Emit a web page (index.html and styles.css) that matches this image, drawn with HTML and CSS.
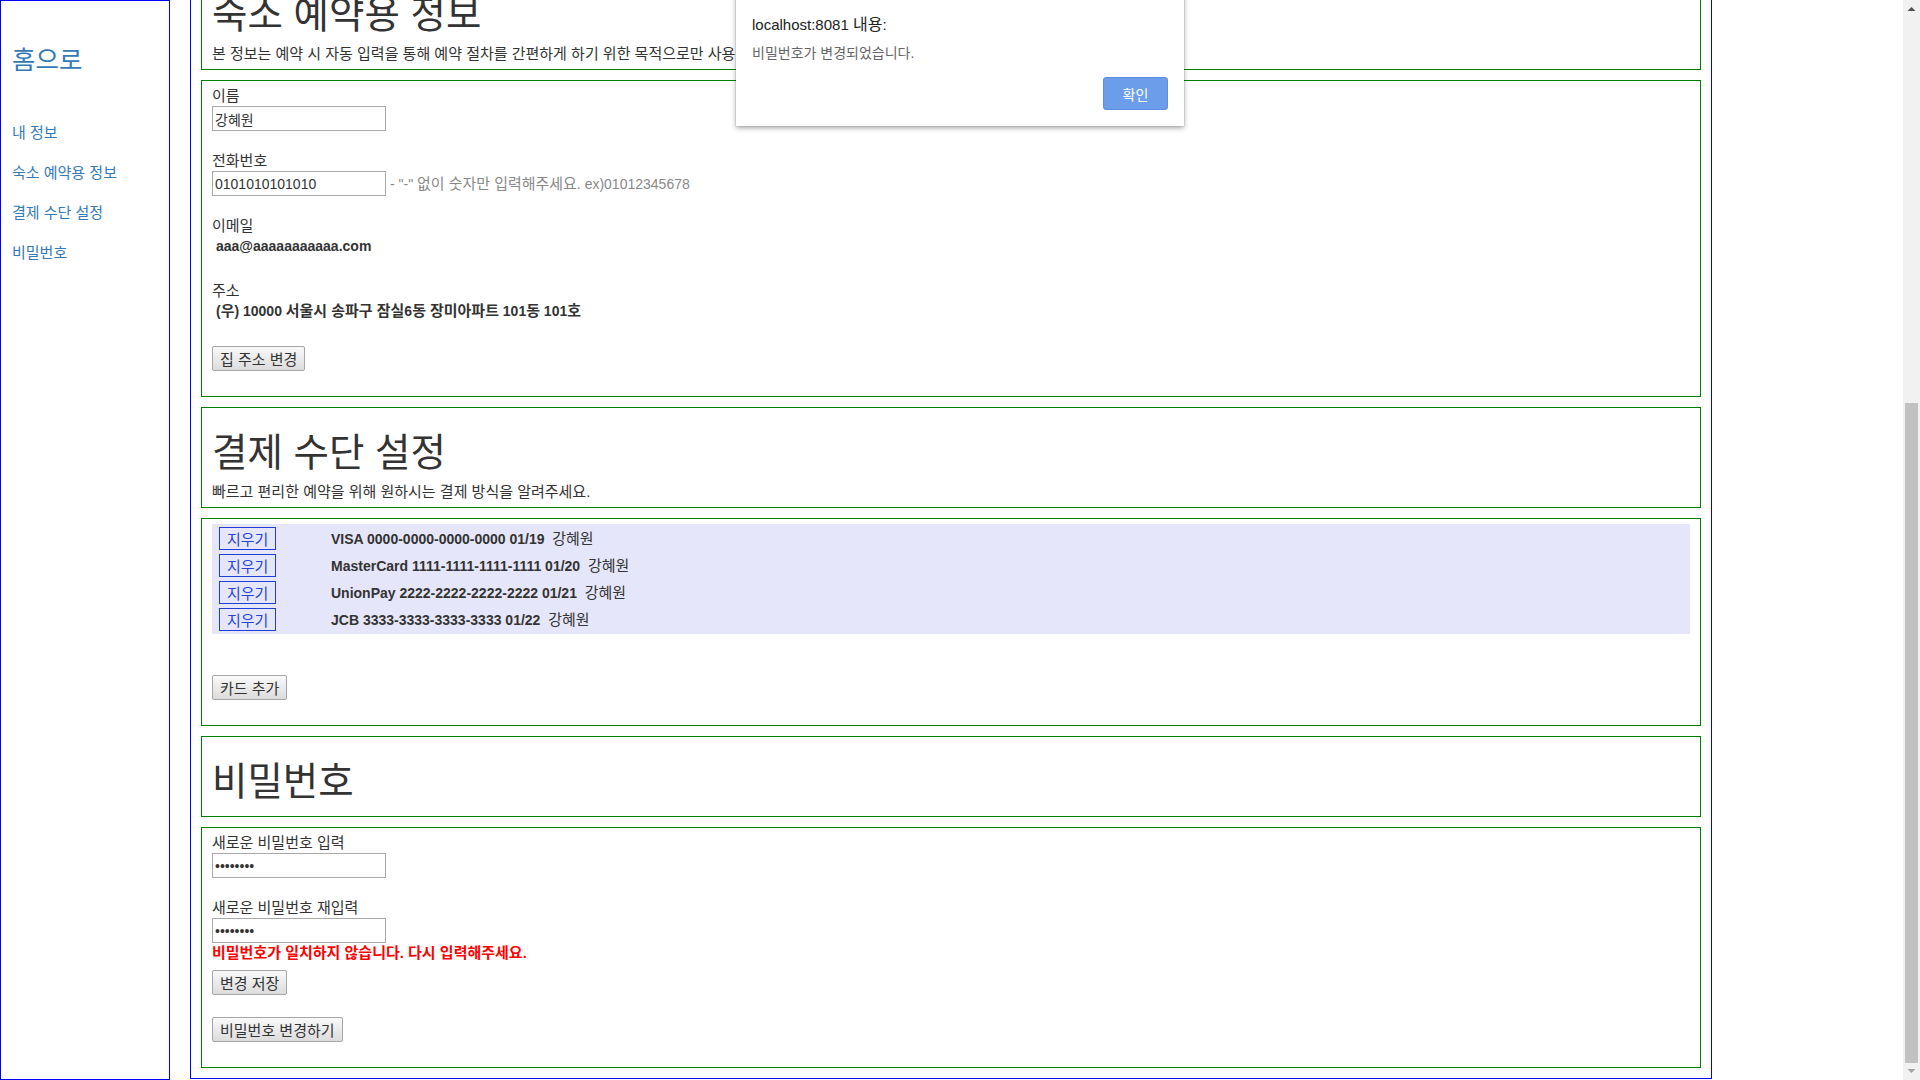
FILE: index.html
```html
<!DOCTYPE html>
<html lang="ko">
<head>
<meta charset="utf-8">
<title>내 정보</title>
<link rel="stylesheet" href="styles.css">
</head>
<body>
<div class="screen">
  <div class="viewport">
    <nav class="sidebar">
      <h3 class="home"><a href="#">홈으로</a></h3>
      <ul class="menu">
        <li><a href="#">내 정보</a></li>
        <li><a href="#">숙소 예약용 정보</a></li>
        <li><a href="#">결제 수단 설정</a></li>
        <li><a href="#">비밀번호</a></li>
      </ul>
    </nav>
    <main class="content">
      <section class="section">
        <h1>숙소 예약용 정보</h1>
        <p class="lead">본 정보는 예약 시 자동 입력을 통해 예약 절차를 간편하게 하기 위한 목적으로만 사용됩니다.</p>
      </section>
      <section class="section">
        <div class="field">
          <label>이름</label>
          <div class="input-row"><input class="text-input" type="text" value="강혜원"></div>
        </div>
        <div class="field">
          <label>전화번호</label>
          <div class="input-row"><input class="text-input" type="text" value="0101010101010"><span class="hint">- "-" <span class="ko">없이 숫자만 입력해주세요</span>. ex)01012345678</span></div>
        </div>
        <div class="field">
          <label>이메일</label>
          <div class="value">aaa@aaaaaaaaaaa.com</div>
        </div>
        <div class="field">
          <label>주소</label>
          <div class="value">(<span class="ko">우</span>) 10000 <span class="ko">서울시 송파구 잠실</span>6<span class="ko">동 장미아파트</span> 101<span class="ko">동</span> 101<span class="ko">호</span></div>
        </div>
        <div class="btn-row addr"><button class="btn">집 주소 변경</button></div>
      </section>
      <section class="section">
        <h1>결제 수단 설정</h1>
        <p class="lead">빠르고 편리한 예약을 위해 원하시는 결제 방식을 알려주세요.</p>
      </section>
      <section class="section">
        <table class="cards">
          <tr><td class="del"><button class="del-btn">지우기</button></td><td><b>VISA 0000-0000-0000-0000 01/19</b>&nbsp; <span class="ko">강혜원</span></td></tr>
          <tr><td class="del"><button class="del-btn">지우기</button></td><td><b>MasterCard 1111-1111-1111-1111 01/20</b>&nbsp; <span class="ko">강혜원</span></td></tr>
          <tr><td class="del"><button class="del-btn">지우기</button></td><td><b>UnionPay 2222-2222-2222-2222 01/21</b>&nbsp; <span class="ko">강혜원</span></td></tr>
          <tr><td class="del"><button class="del-btn">지우기</button></td><td><b>JCB 3333-3333-3333-3333 01/22</b>&nbsp; <span class="ko">강혜원</span></td></tr>
        </table>
        <div class="btn-row"><button class="btn">카드 추가</button></div>
      </section>
      <section class="section">
        <h1>비밀번호</h1>
      </section>
      <section class="section">
        <div class="field">
          <label>새로운 비밀번호 입력</label>
          <div class="input-row"><input class="text-input" type="password" value="aaaaaaaa"></div>
        </div>
        <div class="field tight">
          <label>새로운 비밀번호 재입력</label>
          <div class="input-row"><input class="text-input" type="password" value="aaaaaaaa"></div>
          <p class="error">비밀번호가 일치하지 않습니다. 다시 입력해주세요.</p>
        </div>
        <div class="btn-row save"><button class="btn">변경 저장</button></div>
        <div class="btn-row"><button class="btn">비밀번호 변경하기</button></div>
      </section>
    </main>
  </div>
  <div class="scrollbar">
    <div class="sb-btn"><svg width="17" height="17" viewBox="0 0 17 17"><polygon points="4.5,11 12.5,11 8.5,7" fill="#505050"/></svg></div>
    <div class="sb-track"><div class="sb-thumb"></div></div>
    <div class="sb-btn"><svg width="17" height="17" viewBox="0 0 17 17"><polygon points="4.5,6 12.5,6 8.5,10" fill="#a3a3a3"/></svg></div>
  </div>
  <div class="alert">
    <div class="alert-title">localhost:8081 <span class="ko">내용</span>:</div>
    <div class="alert-msg">비밀번호가 변경되었습니다.</div>
    <div class="alert-actions"><button class="alert-ok">확인</button></div>
  </div>
</div>
</body>
</html>
```
FILE: styles.css
```css
html, body {
  margin: 0;
  padding: 0;
}
body {
  font-family: "Liberation Sans", "Noto Sans CJK KR", sans-serif;
  font-size: 14px;
  line-height: 20px;
  color: #333;
  background: #fff;
}
.ko {
  font-size: 1.07em;
}
.screen {
  position: relative;
  display: flex;
  height: 1080px;
  overflow: hidden;
}
.viewport {
  flex: 1;
  display: flex;
  align-items: flex-start;
  gap: 20px;
  height: 1080px;
  overflow: hidden;
}
.sidebar {
  flex: 0 0 170px;
  box-sizing: border-box;
  height: 1080px;
  border: 1px solid #0000ff;
  padding: 46px 11px 0;
}
.home {
  margin: 0;
  font-size: 25.5px;
  line-height: 26px;
  font-weight: 400;
}
.home a,
.menu a {
  color: #337ab7;
  text-decoration: none;
}
.menu {
  list-style: none;
  margin: 40px 0 0;
  padding: 0;
  font-size: 15px;
}
.menu a {
  display: block;
  padding: 10px 0;
}
.content {
  flex: 0 0 1522px;
  box-sizing: border-box;
  margin-top: -42px;
  border: 1px solid #0000ff;
  padding: 10px;
  display: flex;
  flex-direction: column;
  gap: 10px;
}
.section {
  border: 1px solid #008000;
  padding: 5px 10px;
}
.section h1 {
  margin: 20px 0 10px;
  font-size: 38.5px;
  line-height: 39px;
  font-weight: 400;
  color: #333;
}
.section p {
  margin: 0;
}
.lead {
  font-size: 15px;
}
.field {
  margin-bottom: 20px;
}
.field.tight {
  margin-bottom: 0;
}
.field label {
  display: block;
  font-size: 15px;
}
.input-row {
  display: flex;
  align-items: center;
  height: 25px;
}
.text-input {
  box-sizing: border-box;
  width: 174px;
  height: 25px;
  margin: 0;
  padding: 0 2px;
  border: 1px solid #a9a9a9;
  font-family: "Liberation Sans", "Noto Sans CJK KR", sans-serif;
  font-size: 14px;
  color: #333;
  background: #fff;
}
.hint {
  margin-left: 4px;
  color: #888;
}
.value {
  height: 25px;
  padding-left: 4px;
  font-weight: 700;
}
.btn-row {
  margin-bottom: 20px;
}
.btn-row.addr {
  margin-top: 3px;
}
.btn-row.save {
  margin-top: 7px;
  margin-bottom: 22px;
}
.btn {
  box-sizing: border-box;
  height: 25px;
  margin: 0;
  padding: 0 7px;
  border: 1px solid #a6a6a6;
  border-radius: 2px;
  background: linear-gradient(#f9f9f9, #dcdcdc);
  font-family: "Liberation Sans", "Noto Sans CJK KR", sans-serif;
  font-size: 15px;
  color: #333;
}
.cards {
  width: 100%;
  background: #e6e6fa;
  border-spacing: 2px;
  margin-bottom: 41px;
}
.cards td {
  padding: 1px;
  height: 23px;
  vertical-align: middle;
}
.cards td.del {
  width: 108px;
  padding-left: 5px;
}
.del-btn {
  box-sizing: border-box;
  height: 23px;
  margin: 0;
  padding: 0 7px;
  border: 1px solid #1f3fd6;
  background: transparent;
  color: #2446d6;
  font-family: "Liberation Sans", "Noto Sans CJK KR", sans-serif;
  font-size: 15px;
}
.error {
  color: #ff0000;
  font-weight: 700;
  font-size: 15px;
}
.scrollbar {
  flex: 0 0 17px;
  height: 1080px;
  background: #f1f1f1;
  display: flex;
  flex-direction: column;
}
.sb-btn {
  flex: 0 0 17px;
  height: 17px;
}
.sb-btn svg {
  display: block;
}
.sb-track {
  flex: 1;
  display: flex;
  flex-direction: column;
  justify-content: flex-end;
}
.sb-thumb {
  height: 660px;
  margin: 0 2px;
  background: #c1c1c1;
}
.alert {
  position: absolute;
  left: 736px;
  top: -9px;
  width: 448px;
  box-sizing: border-box;
  padding: 23px 16px 16px;
  background: #fff;
  box-shadow: 0 2px 5px rgba(0, 0, 0, 0.35), 0 0 1px rgba(0, 0, 0, 0.35);
  display: flex;
  flex-direction: column;
}
.alert-title {
  font-size: 15px;
  line-height: 20px;
  color: #222;
}
.alert-msg {
  margin-top: 9px;
  font-size: 14px;
  line-height: 18px;
  color: #666;
}
.alert-actions {
  margin-top: 15px;
  display: flex;
  justify-content: flex-end;
}
.alert-ok {
  width: 65px;
  height: 33px;
  margin: 0;
  border: 1px solid #5c8fe2;
  border-radius: 3px;
  background: #6b9deb;
  color: #fff;
  font-family: "Liberation Sans", "Noto Sans CJK KR", sans-serif;
  font-size: 14px;
}
```
